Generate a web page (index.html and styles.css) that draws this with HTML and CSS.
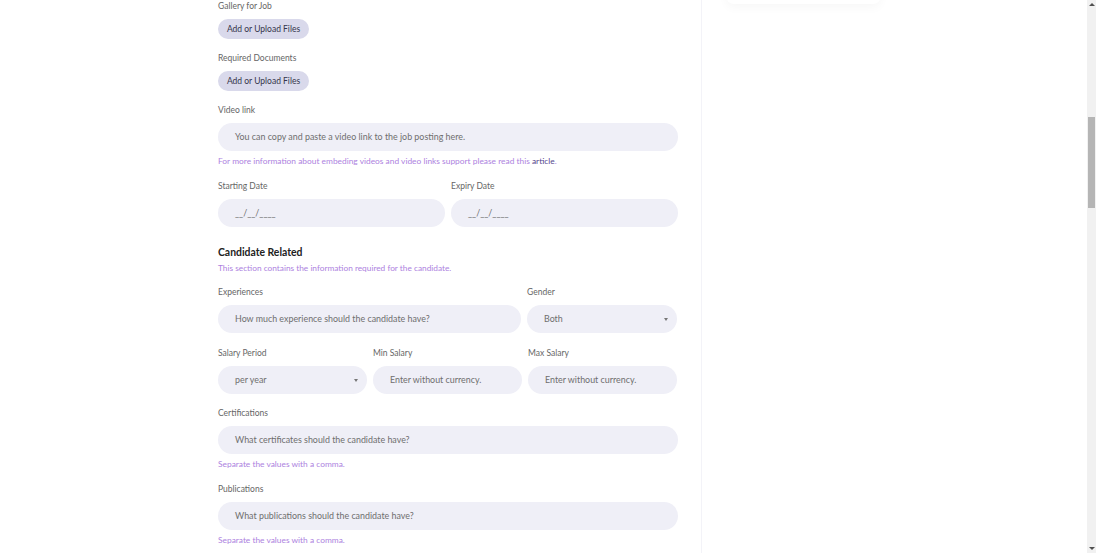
FILE: index.html
```html
<!DOCTYPE html>
<html lang="en">
<head>
<meta charset="utf-8">
<title>Post a Job</title>
<link rel="stylesheet" href="styles.css">
</head>
<body>
<div class="page">
  <main class="main">
    <div class="field">
      <div class="label">Gallery for Job</div>
      <button class="upload">Add or Upload Files</button>
    </div>
    <div class="field">
      <div class="label">Required Documents</div>
      <button class="upload">Add or Upload Files</button>
    </div>
    <div class="field">
      <div class="label">Video link</div>
      <div class="input">You can copy and paste a video link to the job posting here.</div>
      <div class="help">For more information about embeding videos and video links support please read this <a class="link">article</a>.</div>
    </div>
    <div class="grid two">
      <div class="field">
        <div class="label">Starting Date</div>
        <div class="input">__/__/____</div>
      </div>
      <div class="field">
        <div class="label">Expiry Date</div>
        <div class="input">__/__/____</div>
      </div>
    </div>
    <div class="section">
      <h2 class="section-title">Candidate Related</h2>
      <div class="section-sub">This section contains the information required for the candidate.</div>
    </div>
    <div class="grid exp">
      <div class="field">
        <div class="label">Experiences</div>
        <div class="input">How much experience should the candidate have?</div>
      </div>
      <div class="field">
        <div class="label">Gender</div>
        <div class="input select">Both<span class="caret"></span></div>
      </div>
    </div>
    <div class="grid three">
      <div class="field">
        <div class="label">Salary Period</div>
        <div class="input select">per year<span class="caret"></span></div>
      </div>
      <div class="field">
        <div class="label">Min Salary</div>
        <div class="input">Enter without currency.</div>
      </div>
      <div class="field">
        <div class="label">Max Salary</div>
        <div class="input">Enter without currency.</div>
      </div>
    </div>
    <div class="field">
      <div class="label">Certifications</div>
      <div class="input">What certificates should the candidate have?</div>
      <div class="help">Separate the values with a comma.</div>
    </div>
    <div class="field">
      <div class="label">Publications</div>
      <div class="input">What publications should the candidate have?</div>
      <div class="help">Separate the values with a comma.</div>
    </div>
  </main>
  <aside class="sidebar">
    <div class="card"></div>
  </aside>
  <div class="scrollbar">
    <span class="arrow up"></span>
    <div class="track"><div class="thumb"></div></div>
    <span class="arrow down"></span>
  </div>
</div>
</body>
</html>
```
FILE: styles.css
```css
* { box-sizing: border-box; }
html, body { margin: 0; padding: 0; }
body {
  font-family: Lato, "Noto Sans", sans-serif;
  background: #fff;
  color: #666;
  width: 1096px;
  height: 553px;
  overflow: hidden;
}
.page {
  display: flex;
  height: 553px;
}
.main {
  width: 701px;
  flex: none;
  padding: 0 23px 0 218px;
  display: flex;
  flex-direction: column;
}
.field {
  display: flex;
  flex-direction: column;
  align-items: stretch;
  margin-bottom: 13px;
}
.grid .field { margin-bottom: 0; }
.label {
  font-size: 8.5px;
  line-height: 12px;
  color: #666;
  margin-bottom: 7px;
}
.upload {
  align-self: flex-start;
  width: 91px;
  height: 20px;
  border: 0;
  border-radius: 10px;
  background: #d9d9eb;
  color: #34344a;
  font-family: inherit;
  font-size: 8.5px;
  padding: 0;
}
.input {
  position: relative;
  height: 28px;
  border-radius: 14px;
  background: #efeff7;
  color: #6e6e6e;
  font-size: 8.9px;
  line-height: 28px;
  padding: 0 17px;
  white-space: nowrap;
}
.select .caret {
  position: absolute;
  right: 9px;
  top: 13px;
  border-left: 2.5px solid transparent;
  border-right: 2.5px solid transparent;
  border-top: 3px solid #777;
}
.help {
  margin-top: 4px;
  font-size: 8.4px;
  line-height: 12px;
  color: #ad82e0;
}
.help .link { color: #54468e; }
.grid {
  display: grid;
  gap: 6px;
}
.two { grid-template-columns: 1fr 1fr; margin-bottom: 18px; }
.exp { grid-template-columns: 303px 150px; margin-bottom: 14px; }
.three { grid-template-columns: 149px 149px 149px; margin-bottom: 13px; }
.section { margin-bottom: 12px; }
.section-title {
  margin: 0;
  font-size: 10.4px;
  line-height: 14px;
  font-weight: 700;
  color: #222;
}
.section-sub {
  margin-top: 3px;
  font-size: 8.3px;
  line-height: 12px;
  color: #ad82e0;
}
.sidebar {
  flex: 1;
  border-left: 1px solid #f3f3f8;
  background: #fff;
  position: relative;
  overflow: hidden;
}
.card {
  margin: -40px 0 0 24px;
  width: 155px;
  height: 44px;
  border-radius: 8px;
  background: #fff;
  box-shadow: 0 4px 10px rgba(0, 0, 0, 0.03);
}
.scrollbar {
  width: 9px;
  flex: none;
  background: #f1f1f1;
  display: flex;
  flex-direction: column;
  align-items: center;
}
.arrow {
  flex: none;
  width: 0;
  height: 0;
  border-left: 3px solid transparent;
  border-right: 3px solid transparent;
  margin: 3px 0;
}
.arrow.up { border-bottom: 3px solid #505050; }
.arrow.down { border-top: 3px solid #505050; }
.track {
  flex: 1;
  width: 100%;
  padding-top: 108px;
}
.thumb {
  margin: 0 1px;
  height: 91px;
  background: #b5b5b5;
}
```
